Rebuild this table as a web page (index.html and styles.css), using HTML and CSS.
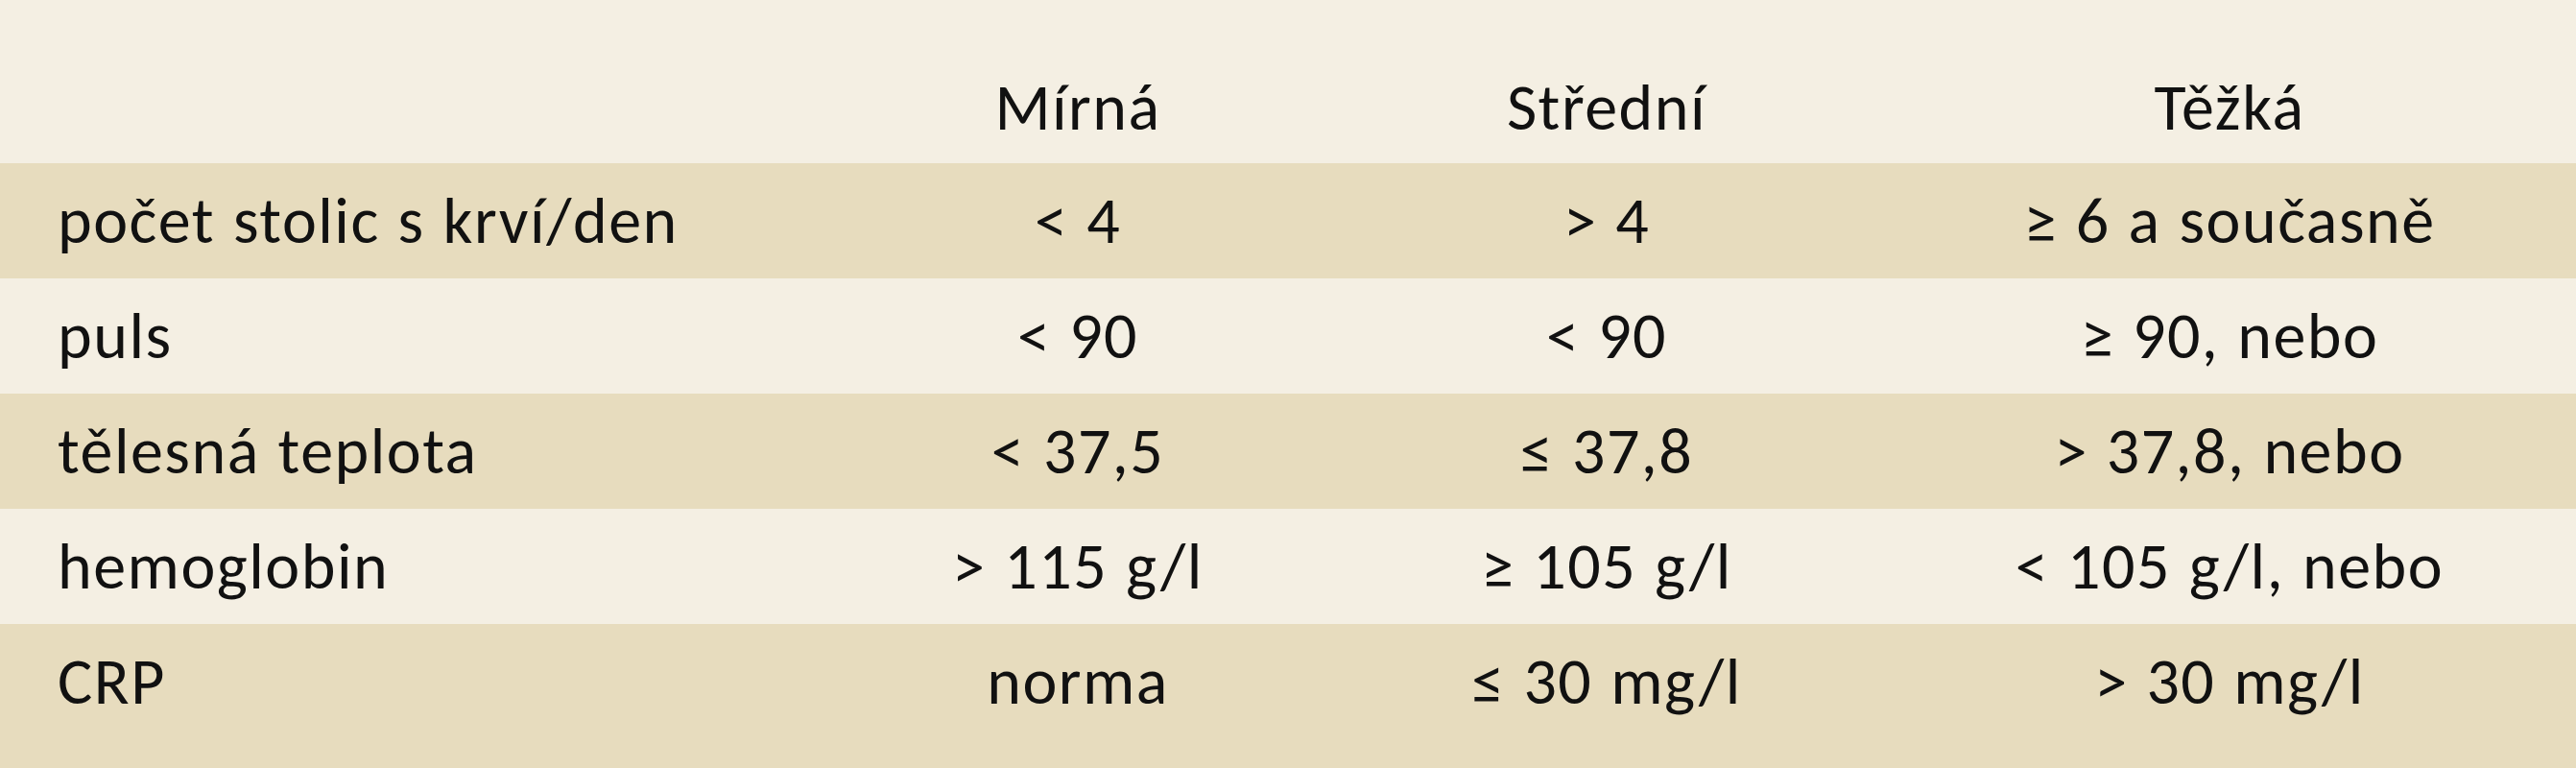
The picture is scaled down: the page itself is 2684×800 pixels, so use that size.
FILE: index.html
```html
<!DOCTYPE html>
<html lang="cs">
<head>
<meta charset="utf-8">
<title>Klasifikace</title>
<link rel="stylesheet" href="styles.css">
</head>
<body>
<div class="grid">
  <div class="row head">
    <div class="cell label"></div>
    <div class="cell">Mírná</div>
    <div class="cell">Střední</div>
    <div class="cell">Těžká</div>
  </div>
  <div class="row band">
    <div class="cell label">počet stolic s krví/den</div>
    <div class="cell">&lt; 4</div>
    <div class="cell">&gt; 4</div>
    <div class="cell">≥ 6 a současně</div>
  </div>
  <div class="row">
    <div class="cell label">puls</div>
    <div class="cell">&lt; 90</div>
    <div class="cell">&lt; 90</div>
    <div class="cell">≥ 90, nebo</div>
  </div>
  <div class="row band">
    <div class="cell label">tělesná teplota</div>
    <div class="cell">&lt; 37,5</div>
    <div class="cell">≤ 37,8</div>
    <div class="cell">&gt; 37,8, nebo</div>
  </div>
  <div class="row">
    <div class="cell label">hemoglobin</div>
    <div class="cell">&gt; 115 g/l</div>
    <div class="cell">≥ 105 g/l</div>
    <div class="cell">&lt; 105 g/l, nebo</div>
  </div>
  <div class="row band last">
    <div class="cell label">CRP</div>
    <div class="cell">norma</div>
    <div class="cell">≤ 30 mg/l</div>
    <div class="cell">&gt; 30 mg/l</div>
  </div>
</div>
</body>
</html>
```
FILE: styles.css
```css
html, body {
  margin: 0;
  padding: 0;
  background: #f4efe3;
}
.grid {
  width: 2684px;
  font-family: "Carlito", "Lato", "Liberation Sans", sans-serif;
  font-size: 68px;
  letter-spacing: 1.5px;
  word-spacing: 2px;
  color: #111111;
}
.row {
  display: grid;
  grid-template-columns: 860px 526px 576px 722px;
  height: 120px;
  box-sizing: border-box;
  padding-top: 19px;
  align-items: start;
}
.row.head {
  height: 170px;
  padding-top: 71px;
}
.row.last {
  height: 150px;
}
.band {
  background: #e7dcbe;
}
.cell {
  line-height: 82px;
  text-align: center;
  white-space: nowrap;
}
.cell.label {
  text-align: left;
  padding-left: 60px;
}
```
